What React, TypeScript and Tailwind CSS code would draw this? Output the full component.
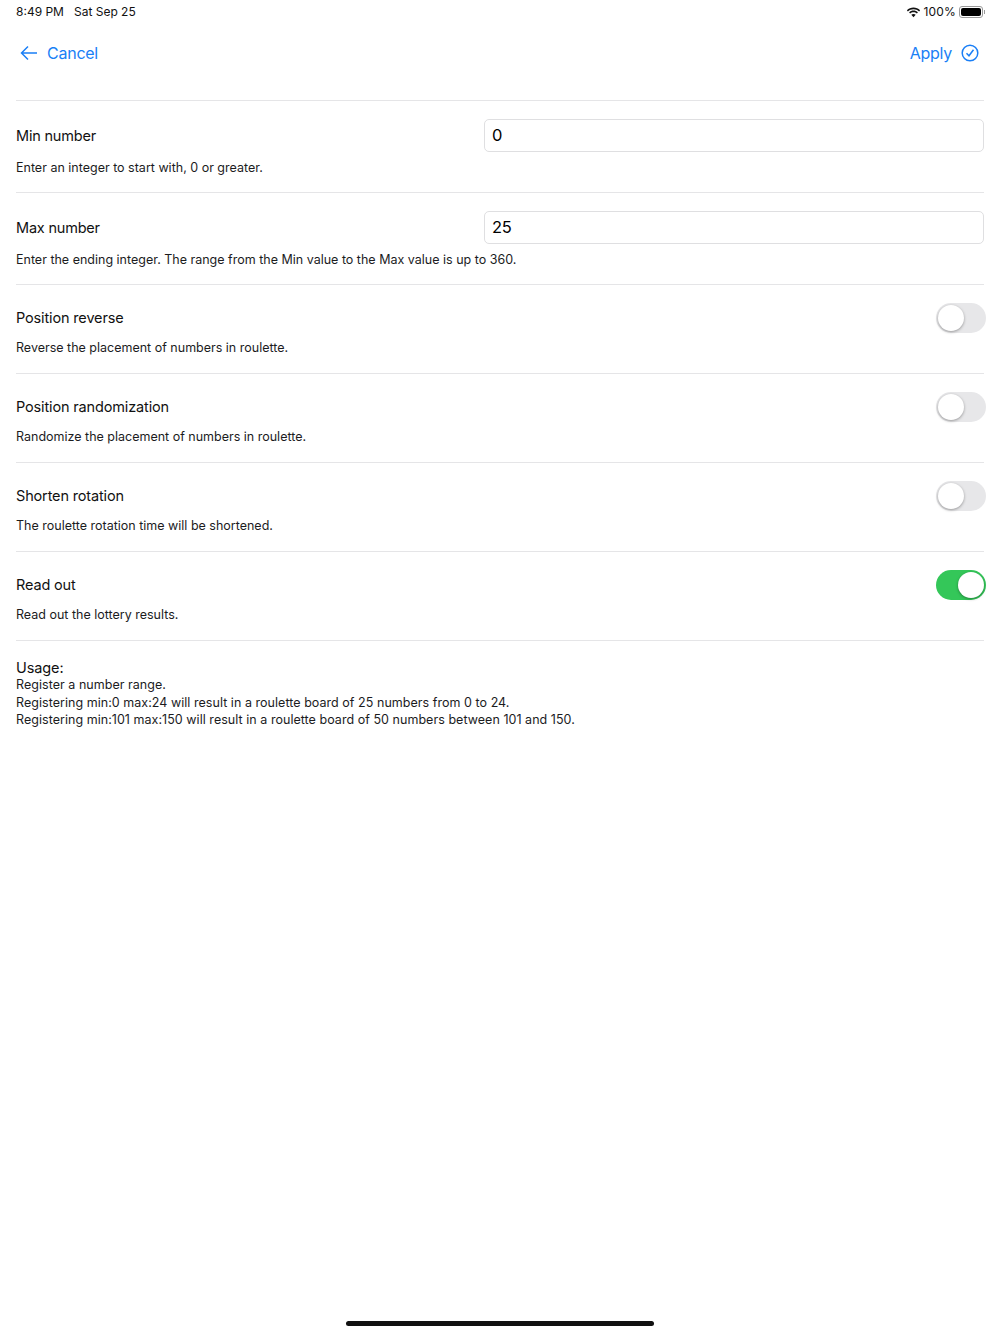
import { ReactNode } from "react";

const NumberRow = ({ label, value, hint }: { label: string; value: string; hint: string }) => (
  <div className="h-[92px] border-b border-[#e5e5e7] pt-[18px]">
    <div className="flex items-center justify-between">
      <span className="text-[14.500px] leading-[20px] tracking-[-0.2px] text-[#111]">{label}</span>
      <div className="flex h-[33px] w-[500px] items-center rounded-[5px] border border-[#dfdfe1] px-[7px] text-[16.500px] tracking-[-0.3px] text-black">
        {value}
      </div>
    </div>
    <p className="mt-[8px] text-[12.500px] leading-[16px] text-[#1c1c1e]">{hint}</p>
  </div>
);

const Toggle = ({ on }: { on?: boolean }) => (
  <div
    className={`-mr-[2px] flex h-[30px] w-[50px] items-center rounded-full p-[2px] ${
      on ? "justify-end bg-[#34c759]" : "justify-start bg-[#e7e7e9]"
    }`}
  >
    <div className="h-[26px] w-[26px] rounded-full bg-white shadow-[0_1px_3px_rgba(0,0,0,0.35)]" />
  </div>
);

const SwitchRow = ({ label, hint, on }: { label: string; hint: string; on?: boolean }) => (
  <div className="h-[89px] border-b border-[#e5e5e7] pt-[18px]">
    <div className="flex h-[30px] items-center justify-between">
      <span className="text-[14.500px] leading-[20px] tracking-[-0.15px] text-[#111]">{label}</span>
      <Toggle on={on} />
    </div>
    <p className="mt-[7px] text-[12.500px] leading-[15px] text-[#1c1c1e]">{hint}</p>
  </div>
);

const NavButton = ({ children }: { children: ReactNode }) => (
  <div className="flex items-center text-[16px] tracking-[-0.25px] text-[#1a7ff6]">{children}</div>
);

export default function App() {
  return (
    <div className="relative h-[1334px] w-[1000px] overflow-hidden bg-white font-['Inter',sans-serif]">
      {/* status bar */}
      <div className="flex h-[24px] items-center justify-between pl-[16px] pr-[15px] text-[12px] text-[#111]">
        <div className="flex gap-[10px]">
          <span>8:49 PM</span>
          <span>Sat Sep 25</span>
        </div>
        <div className="flex items-center">
          <svg width="15" height="11" viewBox="0 0 14 11" className="mr-[3px]">
            <path d="M7 2.200c2.200 0 4.100.8 5.600 2.200l1-1.100C11.800 1.500 9.500.5 7 .5S2.200 1.500.4 3.300l1 1.100C2.900 3 4.800 2.200 7 2.200z" fill="#111" />
            <path d="M7 5.200c1.300 0 2.500.5 3.400 1.300l1-1.100C10.200 4.200 8.700 3.600 7 3.600s-3.200.6-4.400 1.800l1 1.100C4.500 5.700 5.700 5.200 7 5.200z" fill="#111" />
            <path d="M7 6.900c-.9 0-1.600.3-2.200.8L7 10.200l2.200-2.500c-.6-.5-1.300-.8-2.200-.8z" fill="#111" />
          </svg>
          <span className="tracking-[0.15px]">100%</span>
          <div className="ml-[3px] flex h-[12px] w-[24px] items-center rounded-[3px] border border-[#9a9a9a] p-[1px]">
            <div className="h-full w-full rounded-[2px] bg-black" />
          </div>
          <div className="ml-[1px] h-[4px] w-[1px] bg-[#9a9a9a]" />
        </div>
      </div>

      {/* nav */}
      <div className="flex h-[58px] items-center justify-between pl-[20px] pr-[21px]">
        <NavButton>
          <svg width="18" height="16" viewBox="0 0 18 16" fill="none" stroke="currentColor" strokeWidth="1.500" className="mr-[9px]">
            <path d="M17 8H2M8 1.500 1.500 8 8 14.500" />
          </svg>
          Cancel
        </NavButton>
        <NavButton>
          Apply
          <svg width="18" height="18" viewBox="0 0 18 18" fill="none" stroke="currentColor" strokeWidth="1.500" className="ml-[9px]">
            <circle cx="9" cy="9" r="7.800" />
            <path d="M5.500 9.300 8 11.800 12.500 5.800" />
          </svg>
        </NavButton>
      </div>

      {/* form */}
      <div className="mx-[16px] mt-[18px] border-t border-[#e5e5e7]">
        <NumberRow label="Min number" value="0" hint="Enter an integer to start with, 0 or greater." />
        <NumberRow
          label="Max number"
          value="25"
          hint="Enter the ending integer. The range from the Min value to the Max value is up to 360."
        />
        <SwitchRow label="Position reverse" hint="Reverse the placement of numbers in roulette." />
        <SwitchRow label="Position randomization" hint="Randomize the placement of numbers in roulette." />
        <SwitchRow label="Shorten rotation" hint="The roulette rotation time will be shortened." />
        <SwitchRow label="Read out" hint="Read out the lottery results." on />

        <div className="mt-[18px] text-[12.500px] leading-[17.500px] tracking-[0.04px] text-[#1c1c1e]">
          <div className="text-[14.500px] leading-[17px] tracking-[-0.1px] text-[#111]">Usage:</div>
          <div>Register a number range.</div>
          <div>Registering min:0 max:24 will result in a roulette board of 25 numbers from 0 to 24.</div>
          <div>Registering min:101 max:150 will result in a roulette board of 50 numbers between 101 and 150.</div>
        </div>
      </div>

      {/* home indicator */}
      <div className="absolute bottom-[8px] left-[346px] h-[5px] w-[308px] rounded-full bg-[#111]" />
    </div>
  );
}
